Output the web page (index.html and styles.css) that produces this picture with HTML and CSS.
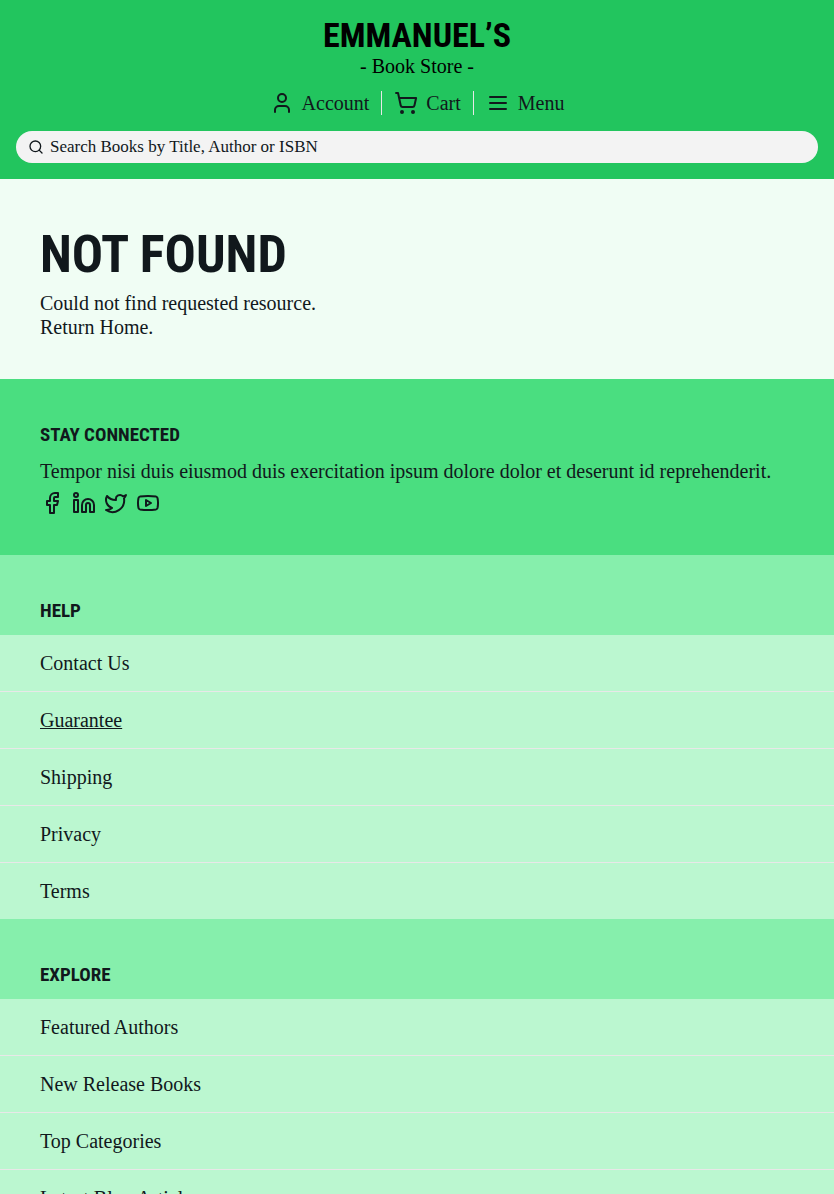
FILE: index.html
```html
<!DOCTYPE html>
<html lang="en">
<head>
<meta charset="utf-8">
<meta name="viewport" content="width=device-width, initial-scale=1">
<title>Emmanuel’s Book Store</title>
<link rel="stylesheet" href="styles.css">
</head>
<body>
<header class="header">
  <a class="logo" href="#">
    <span class="logo-name">EMMANUEL’S</span>
    <span class="logo-sub">- Book Store -</span>
  </a>
  <nav class="nav" aria-label="Main">
    <a class="nav-item" href="#"><svg class="icon" viewBox="0 0 24 24" aria-hidden="true"><path d="M19 21v-2a4 4 0 0 0-4-4H9a4 4 0 0 0-4 4v2"/><circle cx="12" cy="7" r="4"/></svg>Account</a>
    <a class="nav-item" href="#"><svg class="icon" viewBox="0 0 24 24" aria-hidden="true"><circle cx="8" cy="21" r="1"/><circle cx="19" cy="21" r="1"/><path d="M2.05 2.05h2l2.66 12.42a2 2 0 0 0 2 1.58h9.78a2 2 0 0 0 1.95-1.57l1.65-7.43H5.12"/></svg>Cart</a>
    <button class="nav-item" type="button"><svg class="icon" viewBox="0 0 24 24" aria-hidden="true"><path d="M4 6h16M4 12h16M4 18h16"/></svg>Menu</button>
  </nav>
  <form class="search" role="search">
    <svg class="icon icon-small" viewBox="0 0 24 24" aria-hidden="true"><circle cx="11" cy="11" r="8"/><path d="m21 21-4.300-4.300"/></svg>
    <input class="search-input" type="search" aria-label="Search books" placeholder="Search Books by Title, Author or ISBN">
  </form>
</header>
<main class="main">
  <h1 class="title">NOT FOUND</h1>
  <p>Could not find requested resource.</p>
  <p><a href="#">Return Home.</a></p>
</main>
<footer>
  <section class="connect">
    <h2 class="heading">STAY CONNECTED</h2>
    <p>Tempor nisi duis eiusmod duis exercitation ipsum dolore dolor et deserunt id reprehenderit.</p>
    <div class="social">
      <a href="#" aria-label="Facebook"><svg class="icon" viewBox="0 0 24 24"><path d="M18 2h-3a5 5 0 0 0-5 5v3H7v4h3v8h4v-8h3l1-4h-4V7a1 1 0 0 1 1-1h3z"/></svg></a>
      <a href="#" aria-label="LinkedIn"><svg class="icon" viewBox="0 0 24 24"><path d="M16 8a6 6 0 0 1 6 6v7h-4v-7a2 2 0 0 0-4 0v7h-4v-7a6 6 0 0 1 6-6z"/><rect x="2" y="9" width="4" height="12"/><circle cx="4" cy="4" r="2"/></svg></a>
      <a href="#" aria-label="Twitter"><svg class="icon" viewBox="0 0 24 24"><path d="M22 4s-.7 2.100-2 3.400c1.600 10-9.400 17.300-18 11.600 2.200.1 4.400-.6 6-2C3 15.500.5 9.600 3 5c2.200 2.600 5.600 4.100 9 4-.9-4.200 4-6.600 7-3.800 1.100 0 3-1.200 3-1.200z"/></svg></a>
      <a href="#" aria-label="YouTube"><svg class="icon" viewBox="0 0 24 24"><path d="M2.500 17a24.120 24.120 0 0 1 0-10 2 2 0 0 1 1.400-1.400 49.560 49.560 0 0 1 16.200 0A2 2 0 0 1 21.500 7a24.120 24.120 0 0 1 0 10 2 2 0 0 1-1.400 1.400 49.550 49.550 0 0 1-16.200 0A2 2 0 0 1 2.500 17"/><path d="m10 15 5-3-5-3z"/></svg></a>
    </div>
  </section>
  <nav class="group" aria-labelledby="help">
    <h2 class="heading group-heading" id="help">HELP</h2>
    <ul class="links">
      <li><a href="#">Contact Us</a></li>
      <li><a class="underlined" href="#">Guarantee</a></li>
      <li><a href="#">Shipping</a></li>
      <li><a href="#">Privacy</a></li>
      <li><a href="#">Terms</a></li>
    </ul>
  </nav>
  <nav class="group" aria-labelledby="explore">
    <h2 class="heading group-heading" id="explore">EXPLORE</h2>
    <ul class="links">
      <li><a href="#">Featured Authors</a></li>
      <li><a href="#">New Release Books</a></li>
      <li><a href="#">Top Categories</a></li>
      <li><a href="#">Latest Blog Articles</a></li>
    </ul>
  </nav>
</footer>
</body>
</html>
```
FILE: styles.css
```css
* { box-sizing: border-box; }
body, h1, h2, p, ul { margin: 0; padding: 0; }
body {
  background: #f0fdf4;
  color: #11181c;
  font: 20px/24px "Liberation Serif", "Times New Roman", serif;
}
a { color: inherit; text-decoration: none; }

.icon {
  display: block;
  flex: none;
  width: 24px;
  height: 24px;
  fill: none;
  stroke: currentColor;
  stroke-width: 2;
  stroke-linecap: round;
  stroke-linejoin: round;
}
.icon-small { width: 16px; height: 16px; }

.header {
  display: flex;
  flex-direction: column;
  gap: 12px;
  padding: 16px;
  background: #22c55e;
}
.logo {
  display: flex;
  flex-direction: column;
  align-items: center;
  align-self: center;
  color: #000;
}
.logo-name {
  font: bold 34px/38px "Liberation Sans Narrow", "Roboto Condensed", sans-serif;
}
.logo-sub { line-height: 25px; }

.nav { display: flex; justify-content: center; }
.nav-item {
  display: flex;
  align-items: center;
  gap: 8px;
  padding: 0 12px;
  border: 0;
  background: none;
  color: inherit;
  font: inherit;
}
.nav-item + .nav-item { border-left: 1px solid #e8e8e8; }

.search {
  display: flex;
  align-items: center;
  gap: 6px;
  height: 32px;
  margin-top: 4px;
  padding: 0 12px;
  border-radius: 16px;
  background: #f3f3f3;
}
.search-input {
  flex: 1;
  min-width: 0;
  padding: 0;
  border: 0;
  outline: 0;
  background: none;
  color: inherit;
  font: inherit;
  font-size: 17px;
}
.search-input::placeholder { color: inherit; opacity: 1; }

.main { padding: 40px; }
.title {
  font: bold 52px/72px "Liberation Sans Narrow", "Roboto Condensed", sans-serif;
}
.heading {
  font: bold 19px/32px "Liberation Sans Narrow", "Roboto Condensed", sans-serif;
}

.connect {
  display: flex;
  flex-direction: column;
  gap: 8px;
  padding: 40px;
  background: #4ade80;
}
.social { display: flex; gap: 8px; }

.group { background: #86efac; }
.group-heading { padding: 40px 40px 8px; }
.links { list-style: none; background: #bbf7d0; }
.links li { padding: 16px 40px; }
.links li + li { border-top: 1px solid #e8e8e8; }
.underlined { text-decoration: underline; text-decoration-thickness: 1px; }
```
